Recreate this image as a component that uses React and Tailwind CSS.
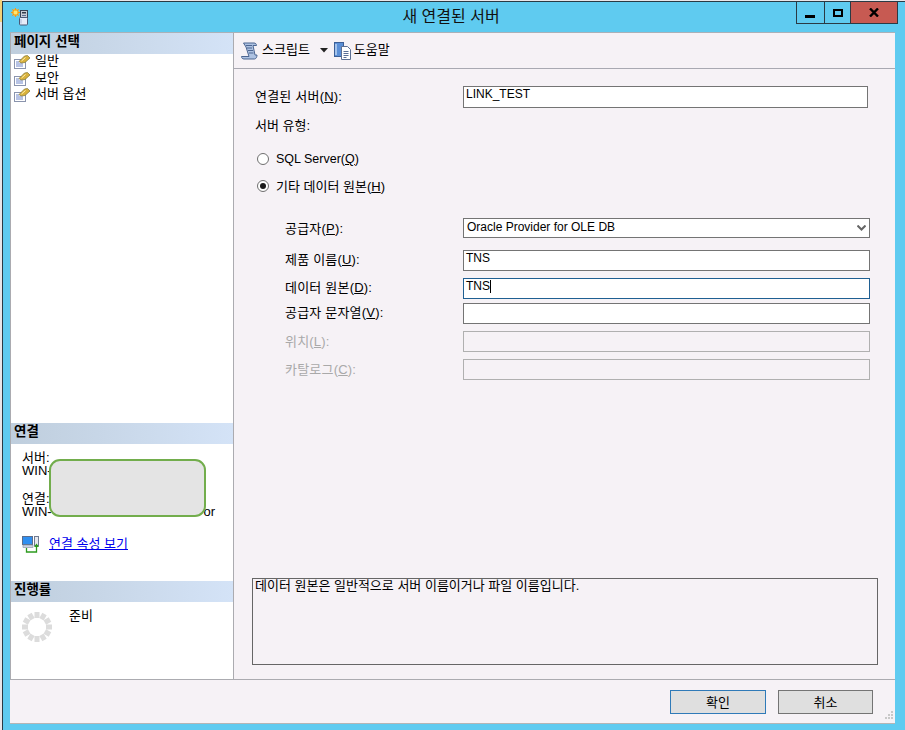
import React from "react";

const FONT = "font-['Liberation_Sans','Noto_Sans_CJK_KR',sans-serif]";

function PageIcon() {
  return (
    <svg width="17" height="14" viewBox="0 0 17 14" className="shrink-0">
      <rect x="0.500" y="4.500" width="11" height="9" fill="#fff" stroke="#8a94ad" />
      <path d="M2 7h3M2 9h7M2 11h7" stroke="#6f86c9" strokeWidth="1" />
      <path d="M5 6.500 L10.500 1 L13.500 0.500 L16 3 L11 7.500 L7 8 Z" fill="#d9b13c" stroke="#7d7436" strokeWidth="0.700" />
      <path d="M7.500 6 L11.500 2.500" stroke="#fff2b0" strokeWidth="1" />
    </svg>
  );
}

function ScriptIcon() {
  return (
    <svg width="18" height="18" viewBox="0 0 18 18" className="shrink-0">
      <path d="M2.500 1h10.500c1.500 0 2.500 1 2.500 2.500h-3.500L14 13h2c0 2-1 4-2.500 4H3c-1.500 0-2.500-1-2.500-2.500H8L5 5 2.500 1z" fill="#aec2e2" stroke="#4d6691" />
      <path d="M5 3.500h6M6 6h5M7 8.500h5M8 11h4.500" stroke="#4d6691" strokeWidth="1" />
    </svg>
  );
}

function HelpIcon() {
  return (
    <svg width="18" height="18" viewBox="0 0 18 18" className="shrink-0">
      <rect x="0.500" y="0.500" width="9" height="14" fill="#5b8fd6" stroke="#3c5f96" />
      <path d="M2 2v11" stroke="#bcd4f2" strokeWidth="1.500" />
      <path d="M7.500 4.500h6l3 3v10h-9z" fill="#fff" stroke="#5d6f92" />
      <path d="M9.500 9.500h5M9.500 11.500h5M9.500 13.500h5M9.500 15.500h3" stroke="#5a6f96" strokeWidth="1" />
    </svg>
  );
}

function WizardIcon() {
  return (
    <svg width="18" height="18" viewBox="0 0 18 18">
      <rect x="9.500" y="2.500" width="7" height="7" fill="#c9ced6" stroke="#394454" />
      <rect x="11" y="4" width="4" height="1.500" fill="#333c4a" />
      <rect x="11" y="7" width="4" height="1" fill="#5d6f92" />
      <rect x="8.500" y="9.500" width="8" height="7.500" rx="1" fill="#e6ecf8" stroke="#4b5a78" />
      <path d="M10 11v4.500" stroke="#aab9d8" strokeWidth="1" />
      <circle cx="4.500" cy="4.500" r="3.400" fill="#f7b12b" />
      <path d="M4.500 0v9M0 4.500h9M1.300 1.300l6.400 6.400M7.700 1.300l-6.400 6.400" stroke="#f29a17" strokeWidth="1" />
      <circle cx="4.500" cy="4.500" r="1.900" fill="#ffe66e" />
    </svg>
  );
}

function ConnectionIcon() {
  return (
    <svg width="17" height="17" viewBox="0 0 17 17" className="shrink-0">
      <rect x="0.500" y="0.500" width="10" height="8" fill="#2f8ff0" stroke="#5b6d8c" />
      <rect x="1" y="9" width="10" height="2.500" fill="#cdd4e0" stroke="#7f8aa0" strokeWidth="0.600" />
      <rect x="12.500" y="0.500" width="4" height="9" fill="#e5e8ef" stroke="#6f7a90" />
      <path d="M4.500 12v4h10v-7" fill="none" stroke="#2d9a1e" strokeWidth="1.300" />
      <path d="M12 11l2.500-3.500 2.500 3.500z" fill="#2d9a1e" />
    </svg>
  );
}

function Spinner() {
  const n = 12;
  return (
    <svg width="30" height="30" viewBox="0 0 30 30">
      {Array.from({ length: n }).map((_, i) => (
        <rect key={i} x="12.500" y="0" width="5" height="6" fill="#dcdcdc" transform={`rotate(${(i * 360) / n} 15 15)`} />
      ))}
    </svg>
  );
}

function SectionHeader({ children }) {
  return (
    <div className="h-[21px] shrink-0 pl-[3px] pb-[3px] flex items-center bg-gradient-to-r from-[#bfcedd] to-[#d4e3f7] text-[13.500px] font-bold text-black leading-none">
      {children}
    </div>
  );
}

function Label({ before, k, after = "):", disabled }) {
  return (
    <span className={`block text-[13px] leading-none whitespace-nowrap tracking-[0.200px] ${disabled ? "text-[#a9a9a9]" : "text-black"}`}>
      {before}(<span className="underline">{k}</span>{after}
    </span>
  );
}

function Field({ children, className = "", tall = "h-[21px]", focus, disabled }) {
  const border = focus ? "border-[#1f5f92]" : disabled ? "border-[#b0b0b0]" : "border-[#747474]";
  return (
    <div className={`${tall} w-[407px] border ${border} ${disabled ? "bg-[#f6f2f6]" : "bg-white"} text-[12px] leading-[13px] text-black flex ${className}`}>
      {children}
    </div>
  );
}

function Row({ before, k, after, disabled, className = "", labelPad = "", children }) {
  return (
    <div className={`flex items-start ${className}`}>
      <div className={`w-[178px] shrink-0 ${labelPad}`}>
        <Label before={before} k={k} after={after} disabled={disabled} />
      </div>
      {children}
    </div>
  );
}

function Radio({ checked }) {
  return (
    <span className="w-[12px] h-[12px] rounded-full border border-[#6f6f6f] bg-white flex items-center justify-center shrink-0">
      {checked && <span className="w-[6px] h-[6px] rounded-full bg-[#1a1a1a]" />}
    </span>
  );
}

export default function App() {
  return (
    <div className={`relative w-[905px] h-[730px] bg-[#e9e6e9] overflow-hidden pl-[2px] pt-[1px] ${FONT}`}>
      <div className="absolute left-0 top-0 w-[2px] h-[22px] bg-[#f3d27a]" />
      <div className="w-[903px] h-[729px] bg-[#5fcbf0] border-l border-t border-[#2a3a44] flex flex-col">
        {/* title bar */}
        <div className="h-[30px] shrink-0 flex items-start relative">
          <div className="w-[30px] pl-[8px] pt-[6px]">
            <WizardIcon />
          </div>
          <div className="flex-1 text-center text-[16px] leading-none pt-[7px] text-[#111] pl-[73px]">새 연결된 서버</div>
          <div className="flex h-[22px] border-l border-b border-r border-[#2a3a44] mr-[7px] w-[102px]">
            <div className="w-[28px] border-r border-[#2a3a44] flex items-center justify-center pt-[2px]">
              <span className="block w-[10px] h-[3px] bg-black mt-[5px] -ml-[2px]" />
            </div>
            <div className="w-[26px] border-r border-[#2a3a44] flex items-center justify-center">
              <span className="block w-[10px] h-[8px] border-2 border-black" />
            </div>
            <div className="flex-1 bg-[#c75a52] flex items-center justify-center">
              <svg width="10" height="9" viewBox="0 0 10 9">
                <path d="M1 0.500 L9 8.500 M9 0.500 L1 8.500" stroke="#000" strokeWidth="2.400" />
              </svg>
            </div>
          </div>
        </div>

        {/* client */}
        <div className="ml-[7px] mr-[10px] h-[692px] bg-[#f6f2f6] flex flex-col border-b border-[#b5b5b5]">
          <div className="flex h-[648px] border-t border-[#aab1b8] border-b border-b-[#ababb0]">
            {/* left */}
            <div className="w-[224px] shrink-0 bg-white border-l border-r border-[#ababb0] flex flex-col">
              <SectionHeader>페이지 선택</SectionHeader>
              <div className="h-[369px] pl-[3px] flex flex-col shrink-0">
                {["일반", "보안", "서버 옵션"].map((t) => (
                  <div key={t} className="h-[16.500px] flex items-center gap-[4px] text-[13px] leading-none text-black">
                    <PageIcon />
                    <span className="-mt-[3px]">{t}</span>
                  </div>
                ))}
              </div>
              <SectionHeader>연결</SectionHeader>
              <div className="relative h-[137px] shrink-0 pl-[11px] pt-[8px] text-[13px] leading-[12px] text-black">
                <div>서버:</div>
                <div className="mt-[1px]">WIN-</div>
                <div className="mt-[16px]">연결:</div>
                <div className="flex mt-[1px]">
                  WIN-<span className="ml-[152px]">or</span>
                </div>
                <div className="flex items-center gap-[10px] mt-[18px]">
                  <ConnectionIcon />
                  <a href="#" className="text-[#0000ee] underline leading-none -mt-[2px]">
                    연결 속성 보기
                  </a>
                </div>
                <div className="absolute left-[38px] top-[15px] w-[157px] h-[58px] rounded-[11px] bg-[#e4e4e4] border-2 border-[#72ad4c]" />
              </div>
              <SectionHeader>진행률</SectionHeader>
              <div className="flex-1 flex pl-[11px] pt-[10px] bg-white">
                <Spinner />
                <div className="ml-[17px] -mt-[3px] text-[13px] leading-none text-black">준비</div>
              </div>
            </div>

            {/* right */}
            <div className="flex-1 min-w-0 flex flex-col">
              <div className="h-[36px] shrink-0 border-b border-[#a9a9b2] flex items-center pl-[7px] text-[13px] text-black leading-none">
                <ScriptIcon />
                <span className="ml-[3px] -mt-[2px]">스크립트</span>
                <svg width="9" height="5" viewBox="0 0 9 5" className="ml-[10px]">
                  <path d="M0 0h8L4 4.500z" fill="#222" />
                </svg>
                <span className="ml-[5px]"><HelpIcon /></span>
                <span className="ml-[2px] -mt-[2px]">도움말</span>
              </div>

              <div className="flex-1 flex flex-col pl-[21px] pt-[17px]">
                <Row before="연결된 서버" k="N" labelPad="w-[208px] pt-[4px]">
                  <Field className="!w-[405px] items-start pl-[2px] pt-[1px]" tall="h-[22px]">LINK_TEST</Field>
                </Row>
                <div className="mt-[11px] text-[13px] leading-none text-black">서버 유형:</div>
                <div className="mt-[21px] ml-[2px] flex items-center gap-[7px] text-[13px] leading-none text-black">
                  <Radio />
                  <span className="text-[12.500px]">SQL Server(<span className="underline">Q</span>)</span>
                </div>
                <div className="mt-[14px] ml-[2px] flex items-center gap-[7px] text-[13px] leading-none text-black">
                  <Radio checked />
                  <span>기타 데이터 원본(<span className="underline">H</span>)</span>
                </div>

                <div className="pl-[30px] mt-[25px] flex flex-col">
                  <Row before="공급자" k="P" labelPad="pt-[4px]">
                    <Field tall="h-[20px]" className="justify-between items-center pl-[3px] pr-[3px]">
                      <span>Oracle Provider for OLE DB</span>
                      <svg width="9" height="6" viewBox="0 0 9 6">
                        <path d="M0.500 0.500 L4.500 4.500 L8.500 0.500" fill="none" stroke="#666" strokeWidth="2" />
                      </svg>
                    </Field>
                  </Row>
                  <Row before="제품 이름" k="U" className="mt-[12px]" labelPad="pt-[3px]">
                    <Field className="items-start pl-[2px] pt-[1px]">TNS</Field>
                  </Row>
                  <Row before="데이터 원본" k="D" className="mt-[7px]" labelPad="pt-[3px]">
                    <Field focus className="items-start pl-[2px] pt-[1px]">
                      TNS<span className="inline-block w-px h-[13px] bg-black" />
                    </Field>
                  </Row>
                  <Row before="공급자 문자열" k="V" className="mt-[4px]" labelPad="pt-[3px]">
                    <Field />
                  </Row>
                  <Row before="위치" k="L" disabled className="mt-[7px]" labelPad="pt-[4px]">
                    <Field disabled />
                  </Row>
                  <Row before="카탈로그" k="C" disabled className="mt-[7px]" labelPad="pt-[4px]">
                    <Field disabled />
                  </Row>
                </div>

                <div className="mt-auto mb-[14px] -ml-[3px] w-[626px] h-[87px] border border-[#666] text-[13px] leading-none text-black pl-[2px]">
                  데이터 원본은 일반적으로 서버 이름이거나 파일 이름입니다.
                </div>
              </div>
            </div>
          </div>

          {/* footer */}
          <div className="flex-1 relative flex justify-end items-start pt-[10px] pr-[22px] gap-[12px]">
            <button className="w-[96px] h-[24px] bg-[#dfdfdf] border border-[#2f7ab8] text-[13px] leading-none text-black">확인</button>
            <button className="w-[95px] h-[24px] bg-[#dfdfdf] border border-[#747474] text-[13px] leading-none text-black">취소</button>
            <svg width="10" height="10" viewBox="0 0 10 10" className="absolute right-[2px] bottom-[2px]">
              <path d="M8 0h2v2H8zM5 3h2v2H5zM8 3h2v2H8zM2 6h2v2H2zM5 6h2v2H5zM8 6h2v2H8z" fill="#c8c8c8" />
            </svg>
          </div>
        </div>
      </div>
    </div>
  );
}
